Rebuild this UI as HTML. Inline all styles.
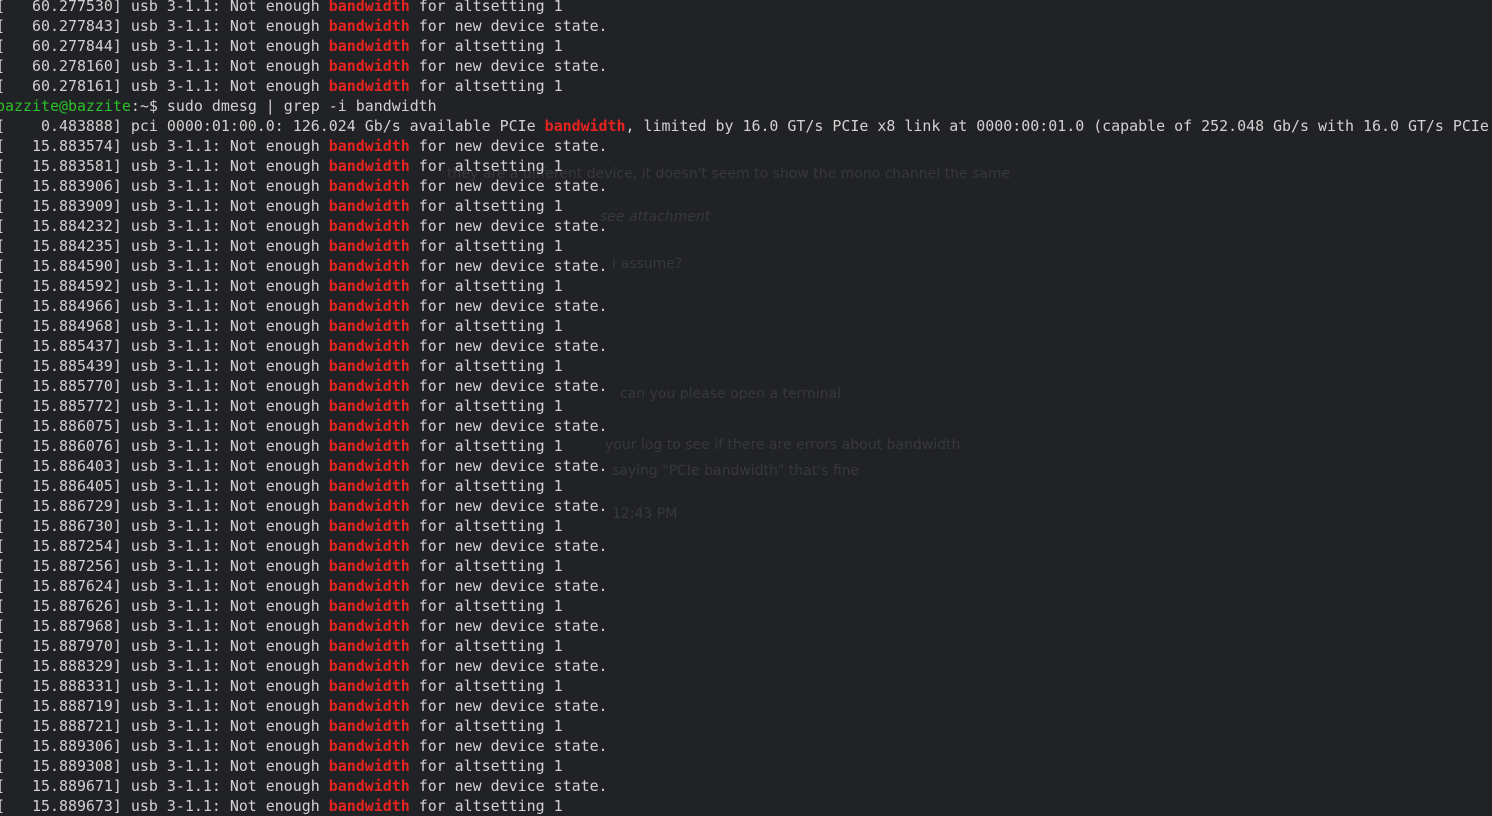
<!DOCTYPE html>
<html><head><meta charset="utf-8">
<style>
html,body{margin:0;padding:0;width:1492px;height:810px;overflow:hidden;background:#212225;}
.g{position:absolute;font-family:"DejaVu Sans","Liberation Sans",sans-serif;font-size:14px;color:#36383c;white-space:nowrap;}
pre{position:absolute;left:-4px;top:-4px;margin:0;font-family:"DejaVu Sans Mono","Liberation Mono",monospace;font-size:14.95px;line-height:20px;color:#d2d2d2;white-space:pre;}
.r{color:#e8231f;font-weight:bold;}
.p{color:#2bc02b;}
</style></head><body>
<div class="g" style="left:447px;top:166px">they are a different device, it doesn't seem to show the mono channel the same</div>
<div class="g" style="left:600px;top:209px;font-style:italic">see attachment</div>
<div class="g" style="left:612px;top:256px">I assume?</div>
<div class="g" style="left:620px;top:386px">can you please open a terminal</div>
<div class="g" style="left:605px;top:437px">your log to see if there are errors about bandwidth</div>
<div class="g" style="left:612px;top:463px">saying "PCIe bandwidth" that's fine</div>
<div class="g" style="left:612px;top:506px">12:43 PM</div>
<pre id="t"></pre>
<script>
var L=[];
function u(n,alt){return "[   "+n+"] usb 3-1.1: Not enough <span class=r>bandwidth</span> for "+(alt?"altsetting 1":"new device state.");}
L.push(u("60.277530",1));L.push(u("60.277843",0));L.push(u("60.277844",1));L.push(u("60.278160",0));L.push(u("60.278161",1));
L.push("<span class=p>bazzite@bazzite</span>:~$ sudo dmesg | grep -i bandwidth");
L.push("[    0.483888] pci 0000:01:00.0: 126.024 Gb/s available PCIe <span class=r>bandwidth</span>, limited by 16.0 GT/s PCIe x8 link at 0000:00:01.0 (capable of 252.048 Gb/s with 16.0 GT/s PCIe");
var n=["883574","883581","883906","883909","884232","884235","884590","884592","884966","884968","885437","885439","885770","885772","886075","886076","886403","886405","886729","886730","887254","887256","887624","887626","887968","887970","888329","888331","888719","888721","889306","889308","889671","889673"];
for(var i=0;i<n.length;i++)L.push(u("15."+n[i],i%2));
document.getElementById("t").innerHTML=L.join("\n");
</script>
</body></html>
